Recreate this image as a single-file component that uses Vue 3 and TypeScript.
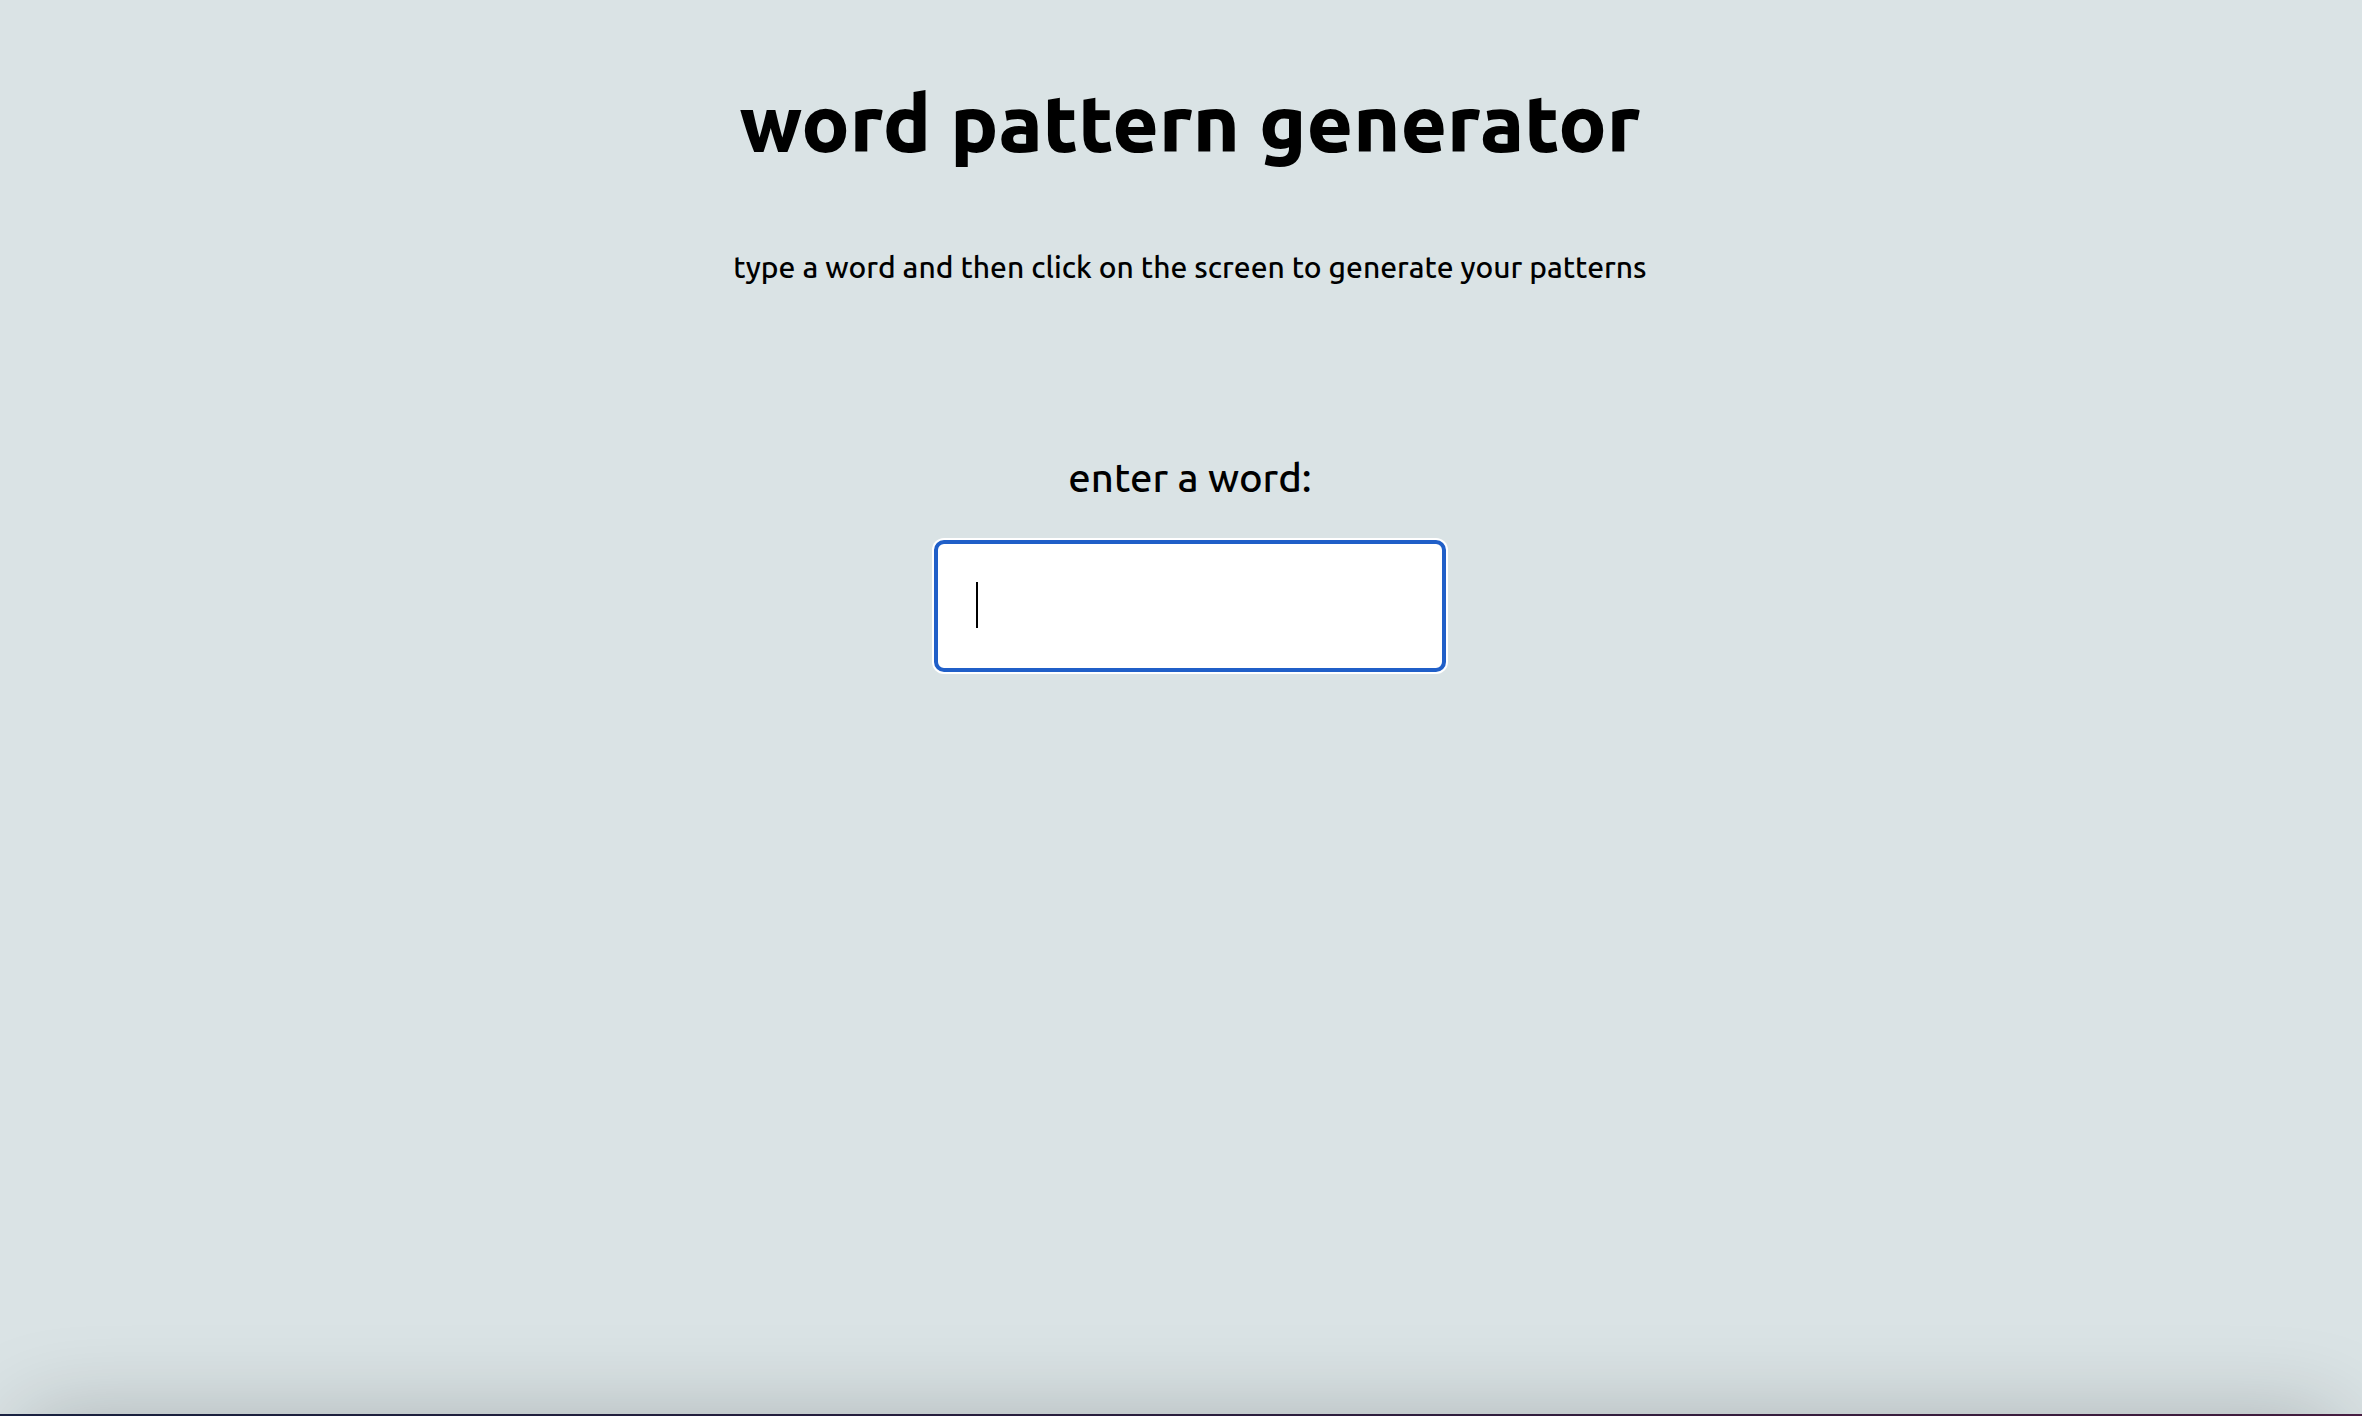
<script setup lang="ts">
import { ref } from 'vue'

const word = ref<string>('')
</script>

<template>
  <div class="page">
    <main class="content">
      <h1 class="title">word pattern generator</h1>
      <p class="hint">type a word and then click on the screen to generate your patterns</p>
      <form class="entry" @submit.prevent>
        <label class="label" for="word">enter a word:</label>
        <div class="field" :class="{ empty: word === '' }">
          <input id="word" v-model="word" class="input" type="text" autocomplete="off" />
        </div>
      </form>
    </main>
    <footer class="dock"></footer>
  </div>
</template>

<style>
body {
  margin: 0;
  background: #dae3e5;
}
</style>

<style scoped>
.page {
  display: flex;
  flex-direction: column;
  min-height: 100vh;
  overflow: hidden;
  background: #dae3e5;
  color: #000;
  font-family: Ubuntu, "Noto Sans", sans-serif;
  font-weight: 500;
}

.content {
  flex: 1;
  display: flex;
  flex-direction: column;
  align-items: center;
  padding: 74px 0 0 18px;
}

.title {
  margin: 0;
  font-size: 80px;
  line-height: 96px;
  font-weight: 800;
}

.hint {
  margin: 77px 0 0;
  font-size: 30px;
  line-height: 40px;
}

.entry {
  display: flex;
  flex-direction: column;
  align-items: center;
  margin-top: 167px;
}

.label {
  font-size: 40px;
  line-height: 48px;
}

.field {
  position: relative;
  display: flex;
  margin-top: 38px;
}

.input {
  box-sizing: border-box;
  width: 512px;
  height: 132px;
  padding: 0 38px;
  border: 4px solid #205fc8;
  border-radius: 10px;
  outline: none;
  box-shadow: 0 0 0 2px #fff;
  background: #fff;
  color: #000;
  font: inherit;
  font-size: 40px;
}

/* resting caret of the empty field */
.field.empty:not(:focus-within)::after {
  content: "";
  position: absolute;
  top: 42px;
  left: 42px;
  width: 2px;
  height: 46px;
  background: #000;
}

.dock {
  position: relative;
  height: 2px;
  background: linear-gradient(90deg, #1b2445, #2f2145 50%, #4a1f45);
}

.dock::before {
  content: "";
  position: absolute;
  z-index: 0;
  top: 2px;
  left: 24px;
  right: 24px;
  height: 200px;
  box-shadow: 0 0 90px rgba(0, 0, 0, 0.22);
}
</style>
